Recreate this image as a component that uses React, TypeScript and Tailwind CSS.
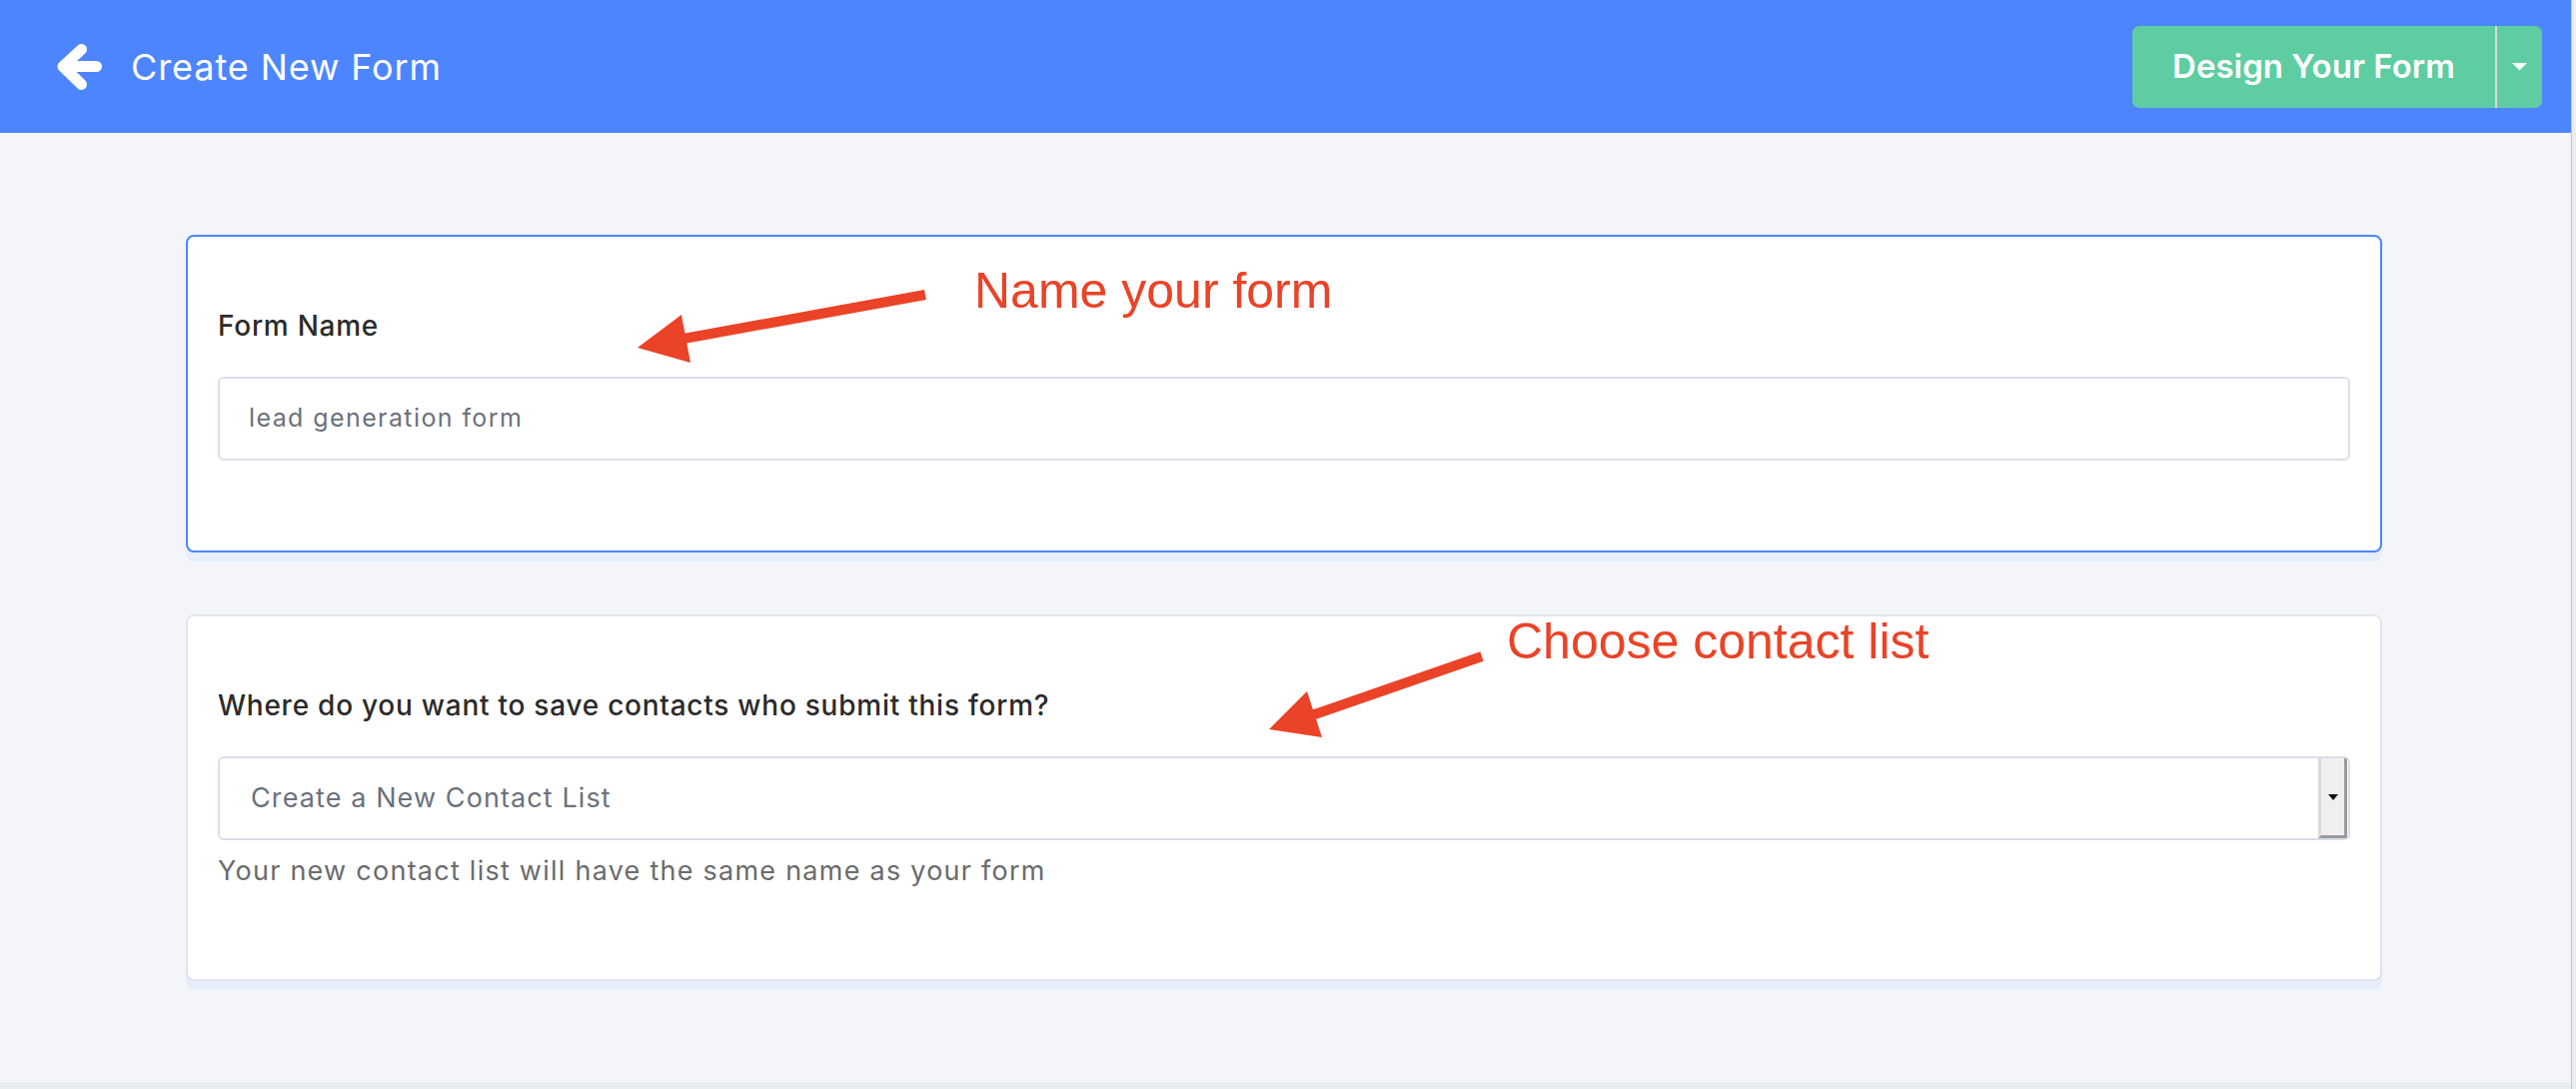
export default function App() {
  return (
    <div className="relative flex h-[1090px] w-full overflow-hidden font-['Inter',sans-serif]">
      <div className="flex w-[2573px] shrink-0 flex-col bg-[#f3f5f9]">
        <header className="flex h-[133px] shrink-0 items-center justify-between bg-[#4d85ff] pl-[52px] pr-[29px]">
          <div className="flex items-center gap-[23px]">
            <svg width="56" height="56" viewBox="0 0 56 56" fill="none" stroke="white" strokeWidth="11" strokeLinecap="round" strokeLinejoin="round">
              <path d="M29.5 10.5 L11 27.5 L29.5 45.5 M11 27.5 H44.5" />
            </svg>
            <span className="text-[36px] leading-none tracking-[0.9px] text-white">Create New Form</span>
          </div>
          <div className="flex h-[82px] overflow-hidden rounded-[7px] bg-[#5ecda2]">
            <div className="flex w-[363px] items-center justify-center text-[33px] font-semibold text-white">Design Your Form</div>
            <div className="w-[2px] bg-[#d9dcd9]" />
            <div className="flex w-[45px] items-center justify-center">
              <svg width="15" height="8" viewBox="0 0 15 8">
                <polygon points="0,0 15,0 7.5,7.5" fill="white" />
              </svg>
            </div>
          </div>
        </header>

        <main className="flex-1 pl-[186px] pr-[189px] pt-[102px]">
          <section className="rounded-[8px] border-2 border-[#4d85ff] bg-white px-[30px] pb-[90px] pt-[72px] shadow-[0_9px_0_0_#e6edfb]">
            <div className="text-[28px] font-medium leading-[34px] tracking-[0.75px] text-[#2b2b2b]">Form Name</div>
            <div className="mt-[34px] flex h-[84px] items-center rounded-[6px] border-2 border-[#dadfe8] px-[29px] text-[25px] tracking-[1.4px] text-[#6b717d]">
              lead generation form
            </div>
          </section>

          <section className="mt-[62px] rounded-[8px] border-2 border-[#e0e5ed] bg-white px-[30px] pb-[91px] pt-[72px] shadow-[0_9px_0_0_#e6edfb]">
            <div className="text-[28px] font-medium leading-[34px] tracking-[0.75px] text-[#2b2b2b]">
              Where do you want to save contacts who submit this form?
            </div>
            <div className="mt-[34px] flex h-[84px] items-stretch overflow-hidden rounded-[6px] border-2 border-[#dadfe8]">
              <div className="flex flex-1 items-center pl-[31px] text-[27px] tracking-[1.1px] text-[#6b717d]">Create a New Contact List</div>
              <div className="mr-[1px] flex w-[29px] items-center justify-center border-b-[3px] border-l-[3px] border-r-[3px] border-b-[#9a9a9a] border-l-[#dadada] border-r-[#9a9a9a] bg-[#efefef]">
                <svg width="10" height="6" viewBox="0 0 10 6">
                  <polygon points="0,0 10,0 5,6" fill="#111" />
                </svg>
              </div>
            </div>
            <div className="mt-[14px] text-[27px] leading-[34px] tracking-[1.25px] text-[#6b6b6b]">
              Your new contact list will have the same name as your form
            </div>
          </section>
        </main>
        <div className="h-[7px] shrink-0 bg-[#e9ecf1]" />
      </div>
      <div className="flex-1 border-l border-[#c6c6c6] bg-[#ededed]" />

      <div className="pointer-events-none absolute inset-0">
        <svg width="2578" height="1090" viewBox="0 0 2578 1090" className="absolute left-0 top-0">
          <line x1="926" y1="295" x2="684" y2="339" stroke="#ea4327" strokeWidth="10" />
          <polygon points="638,348 682,315 691,363" fill="#ea4327" />
          <line x1="1483" y1="657" x2="1313" y2="716" stroke="#ea4327" strokeWidth="10" />
          <polygon points="1270,730 1308,692 1323,738" fill="#ea4327" />
        </svg>
        <div className="absolute left-[975px] top-[266px] whitespace-nowrap font-['Liberation_Sans',Arial,sans-serif] text-[50px] leading-[50px] text-[#ea4327]">
          Name your form
        </div>
        <div className="absolute left-[1508px] top-[617px] whitespace-nowrap font-['Liberation_Sans',Arial,sans-serif] text-[50px] leading-[50px] text-[#ea4327]">
          Choose contact list
        </div>
      </div>
    </div>
  );
}
